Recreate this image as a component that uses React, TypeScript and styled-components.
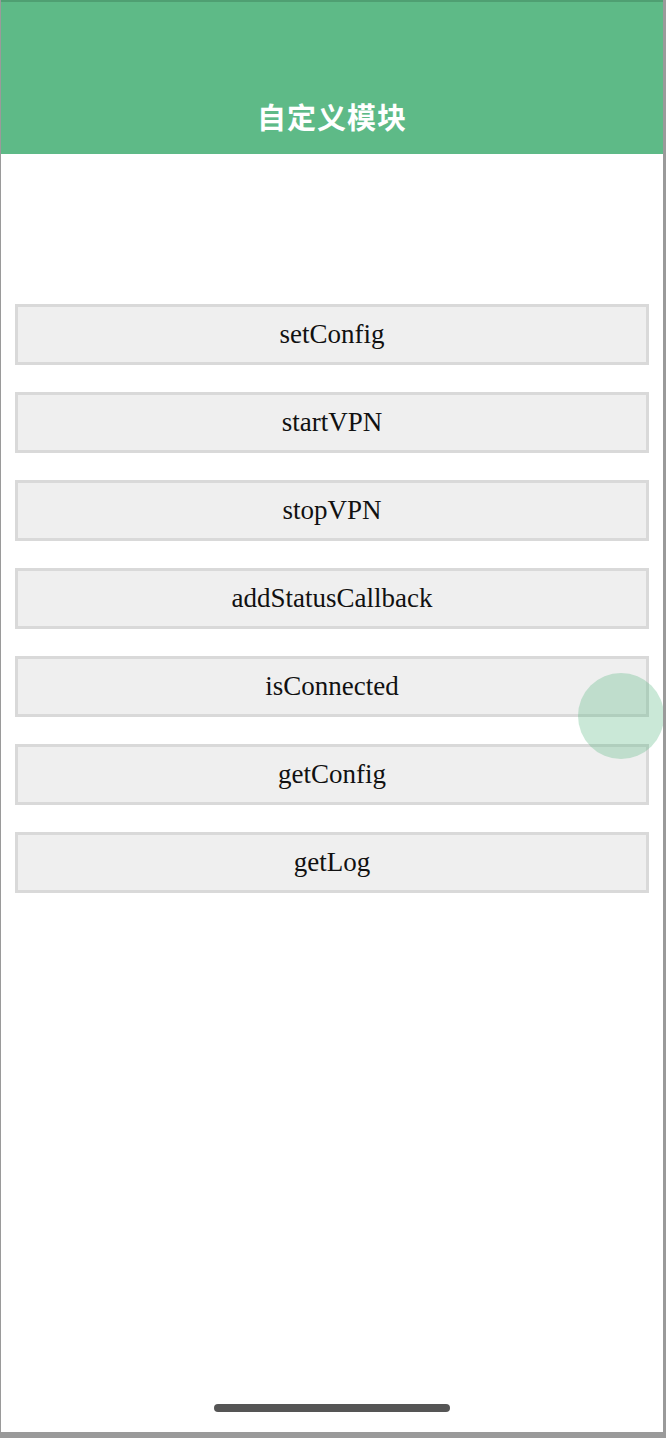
import styled, { createGlobalStyle } from 'styled-components';

const GlobalStyle = createGlobalStyle`
  html, body {
    margin: 0;
    padding: 0;
    background: #9a9a9a;
  }
`;

const methods = [
  'setConfig',
  'startVPN',
  'stopVPN',
  'addStatusCallback',
  'isConnected',
  'getConfig',
  'getLog',
];

const App = (): JSX.Element => {
  return (
    <>
      <GlobalStyle />
      <Frame>
        <Screen>
          <Header>
            <Title>自定义模块</Title>
          </Header>
          <ButtonList>
            {methods.map((name) => (
              <MethodBtn key={name}>{name}</MethodBtn>
            ))}
          </ButtonList>
          <TouchDot />
          <HomeBar />
        </Screen>
      </Frame>
    </>
  );
};

export default App;

const Frame = styled.div`
  width: 666px;
  height: 1438px;
  padding-left: 1px;
  box-sizing: border-box;
`;
const Screen = styled.div`
  position: relative;
  width: 662px;
  height: 1432px;
  background: #ffffff;
  display: flex;
  flex-direction: column;
  overflow: hidden;
`;
const Header = styled.div`
  height: 154px;
  background: #5eba87;
  border-top: 2px solid #4f9f72;
  box-sizing: border-box;
  display: flex;
  align-items: flex-end;
  justify-content: center;
  padding-bottom: 20px;
`;
const Title = styled.div`
  color: #ffffff;
  font-family: 'Noto Sans CJK SC', sans-serif;
  font-weight: 700;
  font-size: 29px;
  line-height: 36px;
  letter-spacing: 1px;
`;
const ButtonList = styled.div`
  display: flex;
  flex-direction: column;
  gap: 27px;
  padding: 150px 14px 0;
`;
const MethodBtn = styled.button`
  height: 61px;
  width: 100%;
  background: #efefef;
  border: 3px solid #d9d9d9;
  box-sizing: border-box;
  font-family: 'Liberation Serif', 'Times New Roman', serif;
  font-size: 27px;
  color: #111111;
  padding: 0;
  cursor: pointer;
`;
const TouchDot = styled.div`
  position: absolute;
  left: 577px;
  top: 673px;
  width: 86px;
  height: 86px;
  border-radius: 50%;
  background: rgba(94, 186, 135, 0.33);
`;
const HomeBar = styled.div`
  position: absolute;
  left: 213px;
  bottom: 20px;
  width: 236px;
  height: 8px;
  border-radius: 4px;
  background: #555555;
`;
